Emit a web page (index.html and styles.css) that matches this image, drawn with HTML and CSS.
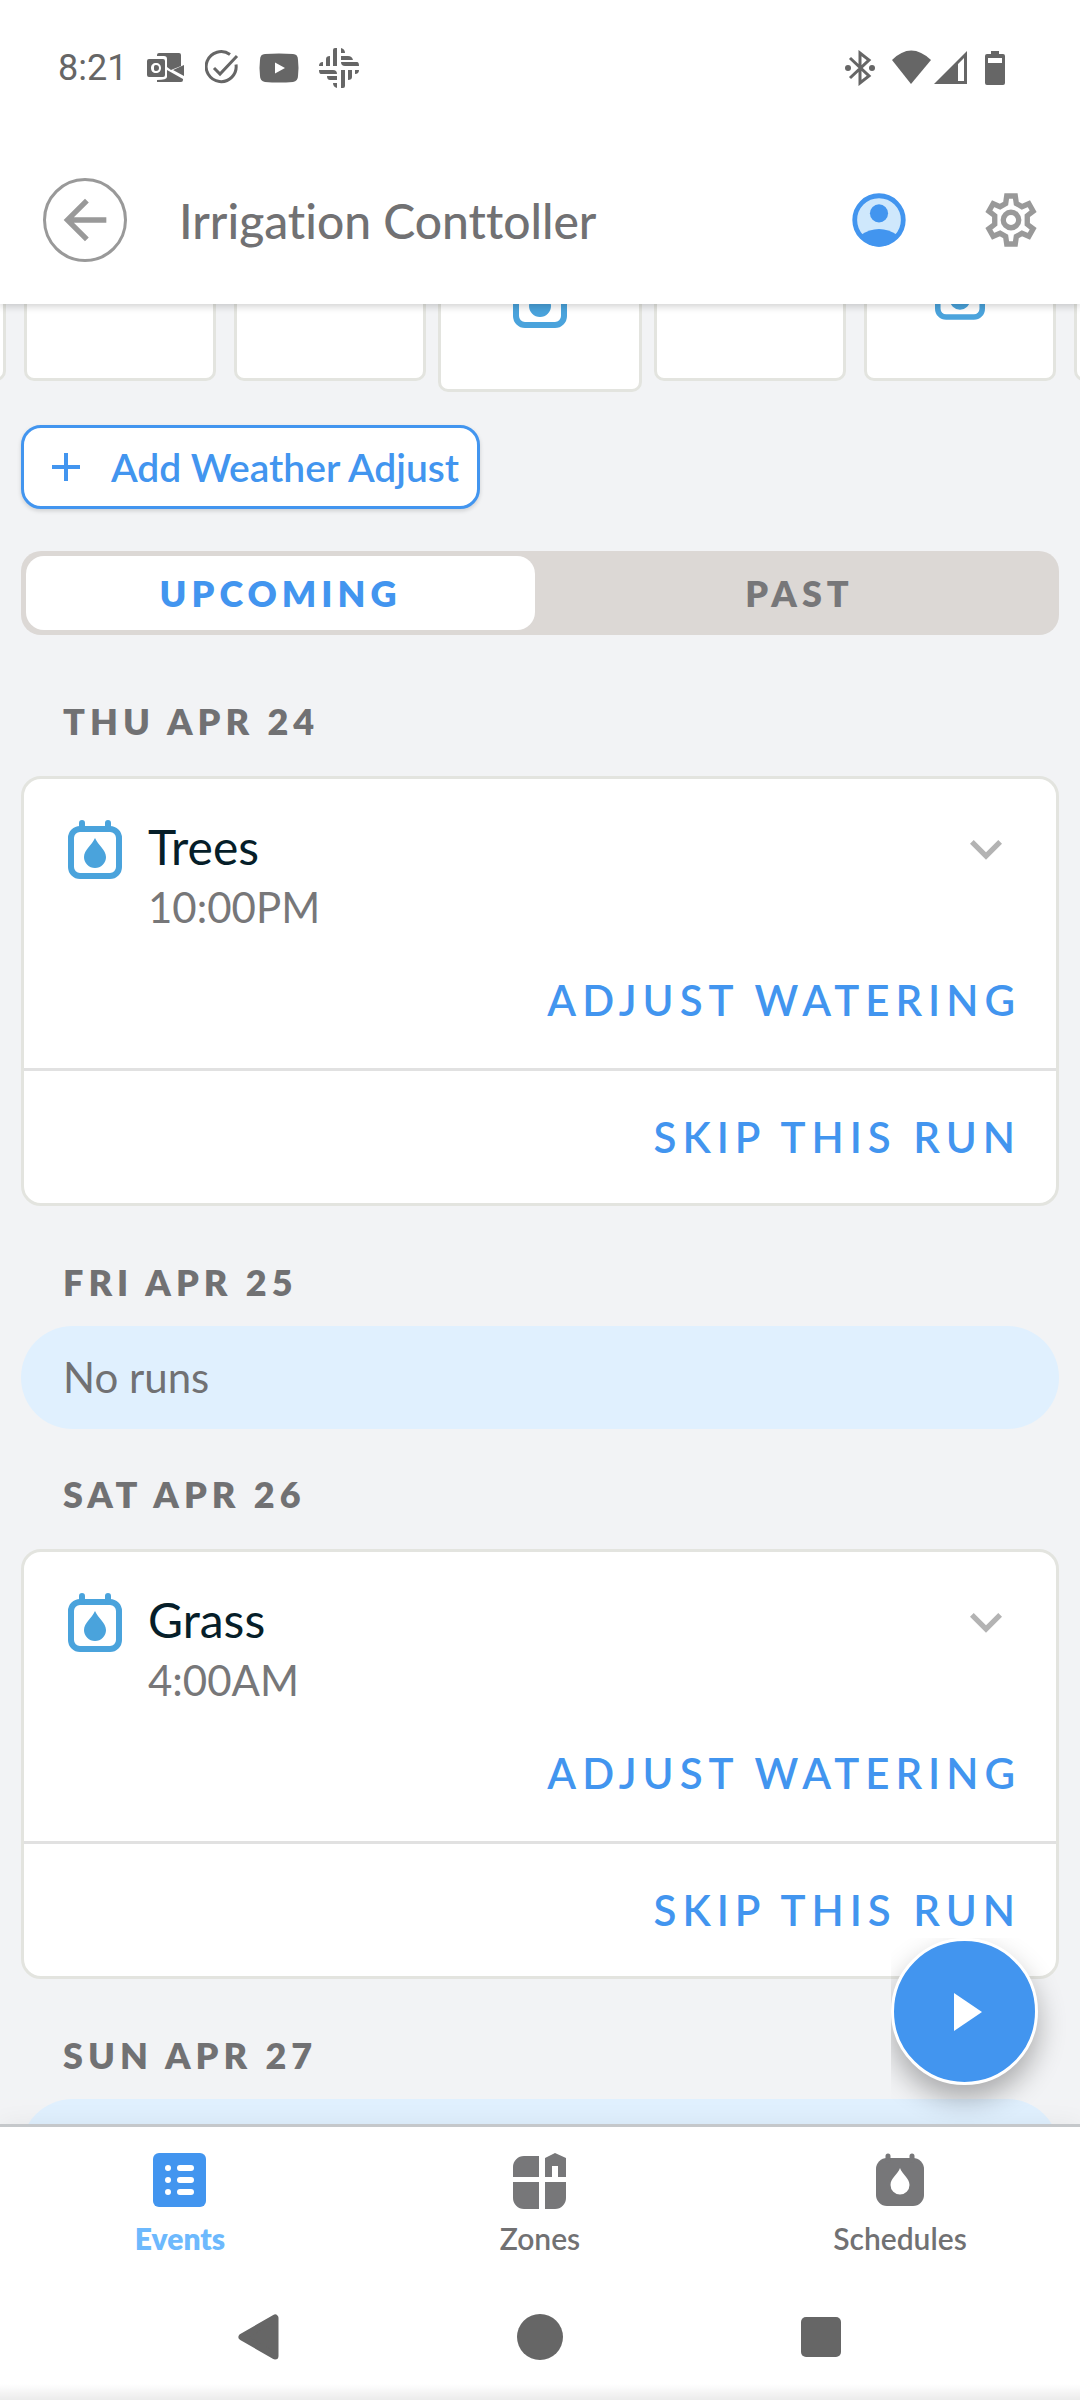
FILE: index.html
```html
<!DOCTYPE html>
<html lang="en">
<head>
	<meta charset="utf-8">
	<meta name="viewport" content="width=device-width, initial-scale=1">
	<title>Irrigation Conttoller</title>
	<link rel="stylesheet" href="styles.css">
</head>
<body>
	<!-- shared icons -->
	<svg class="icon-defs" aria-hidden="true">
		<symbol id="calendar" viewBox="0 0 54 59">
			<rect x="3" y="9" width="48" height="47" rx="9" fill="none" stroke="currentColor" stroke-width="6"/>
			<path d="M14 8V3M40 8V3" stroke="currentColor" stroke-width="6" stroke-linecap="round"/>
			<path d="M27 18c3 7 11 12 11 19a11 11 0 0 1-22 0c0-7 8-12 11-19z" fill="currentColor"/>
		</symbol>
		<symbol id="chevron" viewBox="0 0 24 24">
			<path d="M7.4 8.6 12 13.2l4.6-4.6L18 10l-6 6-6-6z" fill="currentColor"/>
		</symbol>
	</svg>

	<header class="top">
		<div class="status-bar">
			<div class="status-left">
				<span class="time">8:21</span>
				<svg width="38" height="32" viewBox="0 0 38 32">
					<path d="M12 1h20a2 2 0 0 1 2 2v11l-10 4-4-3V7q0-3-3-3h-7V3a2 2 0 0 1 2-2zM10 28q10 0 10-3v-7l16 9v1a2 2 0 0 1-2 2H10zM26 18l11-5v11z" fill="#666"/>
					<path fill-rule="evenodd" d="M2 7h14a2 2 0 0 1 2 2v14a2 2 0 0 1-2 2H2a2 2 0 0 1-2-2V9a2 2 0 0 1 2-2zm7 4c-3 0-5 2-5 5s2 5 5 5 5-2 5-5-2-5-5-5zm0 2c2 0 3 1 3 3s-1 3-3 3-2-1-2-3 0-3 2-3z" fill="#666"/>
				</svg>
				<svg width="34" height="36" viewBox="0 0 34 36">
					<path d="M25 4.500A15 15 0 1 0 31 14.500" fill="none" stroke="#666" stroke-width="3"/>
					<path d="M9 18l6 6L32 6" fill="none" stroke="#666" stroke-width="3"/>
				</svg>
				<svg width="40" height="30" viewBox="0 0 40 30">
					<path d="M6 1q14-1 28 0 5 0 5 6 1 8 0 16 0 5-5 6-14 1-28 0-5-1-5-6-1-8 0-16 0-6 5-6z" fill="#666"/>
					<path d="M16 9.500v11l10-5.500z" fill="#fff"/>
				</svg>
				<svg width="40" height="40" viewBox="0 0 40 40" fill="#666">
					<path d="M14 18V2q0-2 2-2h2v18zM22 0q4 1 4 5h-4zM7 18v-7q0-3 4-3v10zM0 18q0-4 4-4v4z"/>
					<path d="M22 14h16q2 0 2 4H26q-4 0-4-4zM22 8h7q4 0 5 4H22z"/>
					<path d="M26 22v16q0 2-2 2h-2V22zM33 22v7q0 3-4 3V22zM40 22q0 4-4 4v-4z"/>
					<path d="M18 26H2q-2 0-2-4h14q4 0 4 4zM18 32h-7q-3 0-3-4h10zM18 40q-4-1-4-5h4z"/>
				</svg>
			</div>
			<div class="status-right">
				<svg width="30" height="36" viewBox="0 0 30 36">
					<path d="M5 8l19 18-9 7V3l9 7L5 28" fill="none" stroke="#666" stroke-width="3"/>
					<circle cx="3" cy="18" r="3" fill="#666"/>
					<circle cx="27" cy="18" r="3" fill="#666"/>
				</svg>
				<svg width="76" height="36" viewBox="0 0 76 36">
					<path d="M0 10Q19-9 39 10L19 34z" fill="#666"/>
					<path fill-rule="evenodd" d="M75 1v33H42zM66 14v17h6V8z" fill="#666"/>
				</svg>
				<svg width="20" height="36" viewBox="0 0 20 36">
					<path fill-rule="evenodd" d="M6 1h8v3h4a2 2 0 0 1 2 2v27a2 2 0 0 1-2 2H2a2 2 0 0 1-2-2V6a2 2 0 0 1 2-2h4zM3 8v5h14V8z" fill="#666"/>
				</svg>
			</div>
		</div>
		<div class="app-bar">
			<button class="back" aria-label="Back">
				<svg width="64" height="64" viewBox="0 0 24 24" fill="#999"><path d="M20 11H7.830l5.590-5.590L12 4l-8 8 8 8 1.410-1.410L7.830 13H20z"/></svg>
			</button>
			<h1>Irrigation Conttoller</h1>
			<button class="icon-button" aria-label="Account">
				<svg width="64" height="64" viewBox="0 0 24 24">
					<circle cx="12" cy="12" r="9.100" fill="#cfe8fc" stroke="#4295ef" stroke-width="1.800"/>
					<circle cx="12" cy="9.500" r="3.400" fill="#4295ef"/>
					<path d="M5 17.700Q12 13 19 17.700 16.500 22 12 22T5 17.700z" fill="#4295ef"/>
				</svg>
			</button>
			<button class="icon-button" aria-label="Settings">
				<svg width="64" height="64" viewBox="0 0 24 24" fill="none" stroke="#999" stroke-width="2">
					<path d="M10.400 3h3.200l.4 2.800 2.100 1.200 2.600-1.100 1.600 2.800-2.200 1.700v3.200l2.200 1.700-1.600 2.800-2.600-1.100-2.100 1.200-.4 2.800h-3.200l-.4-2.800-2.100-1.200-2.600 1.100-1.600-2.800 2.200-1.700v-3.200L3.700 8.700l1.600-2.800L7.900 7 10 5.800z"/>
					<circle cx="12" cy="12" r="2.900"/>
				</svg>
			</button>
		</div>
	</header>

	<main class="content">
		<div class="week">
			<div class="week-day"></div>
			<div class="week-day"></div>
			<div class="week-day"></div>
			<div class="week-day current"><svg class="calendar"><use href="#calendar"/></svg></div>
			<div class="week-day"></div>
			<div class="week-day"><svg class="calendar"><use href="#calendar"/></svg></div>
			<div class="week-day"></div>
		</div>

		<button class="add-button">
			<svg width="28" height="28" viewBox="0 0 28 28"><path d="M14 0v28M0 14h28" stroke="#4295ef" stroke-width="4"/></svg>
			Add Weather Adjust
		</button>

		<div class="tabs">
			<button class="tab active">UPCOMING</button>
			<button class="tab">PAST</button>
		</div>

		<h2>THU APR 24</h2>
		<section class="card">
			<div class="run">
				<svg class="calendar"><use href="#calendar"/></svg>
				<div class="run-text">
					<div class="run-name">Trees</div>
					<div class="run-time">10:00PM</div>
				</div>
				<button class="expand" aria-label="Show details"><svg width="64" height="64"><use href="#chevron"/></svg></button>
			</div>
			<button class="action">ADJUST WATERING</button>
			<button class="action skip">SKIP THIS RUN</button>
		</section>

		<h2>FRI APR 25</h2>
		<div class="no-runs">No runs</div>

		<h2>SAT APR 26</h2>
		<section class="card">
			<div class="run">
				<svg class="calendar"><use href="#calendar"/></svg>
				<div class="run-text">
					<div class="run-name">Grass</div>
					<div class="run-time">4:00AM</div>
				</div>
				<button class="expand" aria-label="Show details"><svg width="64" height="64"><use href="#chevron"/></svg></button>
			</div>
			<button class="action">ADJUST WATERING</button>
			<button class="action skip">SKIP THIS RUN</button>
		</section>

		<h2>SUN APR 27</h2>
		<div class="no-runs"></div>
	</main>

	<footer class="bottom">
		<button class="play" aria-label="Run now">
			<svg width="28" height="38" viewBox="0 0 28 38"><path d="M0 0v38l28-19z" fill="#fff"/></svg>
		</button>
		<nav class="nav">
			<a href="#" class="nav-item active">
				<svg width="64" height="64" viewBox="0 0 64 64">
					<rect x="5" y="5" width="53" height="54" rx="6" fill="#4295ef"/>
					<path d="M20 20h0M20 32h0M20 44h0M32 20h11M32 32h11M32 44h11" stroke="#fff" stroke-width="6" stroke-linecap="round"/>
				</svg>
				Events
			</a>
			<a href="#" class="nav-item">
				<svg width="64" height="64" viewBox="0 0 64 64" fill="#777779">
					<path d="M16 8h15v21H5V19A11 11 0 0 1 16 8zM5 34h26v27H16A11 11 0 0 1 5 50zM37 34h21v16a11 11 0 0 1-11 11H37z"/>
					<path d="M37 10l10-5 11 5v19h-8V18h-6v11h-7z"/>
				</svg>
				Zones
			</a>
			<a href="#" class="nav-item">
				<svg width="64" height="64" viewBox="0 0 64 64">
					<rect x="8" y="10" width="48" height="48" rx="11" fill="#777779"/>
					<path d="M20 12V8M44 12V8" stroke="#777779" stroke-width="5" stroke-linecap="round"/>
					<path d="M32 20c2 6 9.500 10 9.500 17a9.500 9.500 0 0 1-19 0c0-7 7.500-11 9.500-17z" fill="#fff"/>
				</svg>
				Schedules
			</a>
		</nav>
		<div class="system-nav">
			<button aria-label="System back"><svg width="46" height="46" viewBox="0 0 46 46"><path d="M39 4v38L6 23z" fill="#666" stroke="#666" stroke-width="7" stroke-linejoin="round"/></svg></button>
			<button aria-label="Home"><svg width="46" height="46" viewBox="0 0 46 46"><circle cx="23" cy="23" r="23" fill="#666"/></svg></button>
			<button aria-label="Recent apps"><svg width="46" height="46" viewBox="0 0 46 46"><rect x="3" y="3" width="40" height="40" rx="5" fill="#666"/></svg></button>
		</div>
	</footer>
</body>
</html>
```
FILE: styles.css
```css
*{
	box-sizing: border-box;
}
body{
	margin: 0;
	height: 100vh;
	display: flex;
	flex-direction: column;
	overflow: hidden;
	background: #f2f3f5;
	color: #717173;
	font-family: Lato, sans-serif;
	font-variant-ligatures: none;
}
button{
	padding: 0;
	border: 0;
	background: none;
	color: inherit;
	font-family: inherit;
}
svg{
	display: block;
	flex: none;
}
.icon-defs{
	position: absolute;
	width: 0;
	height: 0;
}

/* header */
.top{
	flex: none;
	z-index: 1;
	background: white;
	box-shadow: 0 2px 8px rgba(0, 0, 0, 0.2);
}
.status-bar{
	height: 136px;
	padding: 0 75px 0 58px;
	display: flex;
	justify-content: space-between;
	align-items: center;
}
.status-left, .status-right{
	display: flex;
	align-items: center;
	gap: 20px;
}
.status-right{
	gap: 17px;
}
.time{
	color: #666;
	font-family: Roboto, sans-serif;
	font-size: 36px;
}
.app-bar{
	height: 168px;
	padding: 0 37px 0 43px;
	display: flex;
	align-items: center;
}
.back{
	width: 84px;
	height: 84px;
	display: flex;
	justify-content: center;
	align-items: center;
	border: 3px solid #999;
	border-radius: 50%;
}
h1{
	flex: 1;
	margin: 0 0 0 52px;
	font-size: 48px;
	font-weight: 500;
}
.icon-button{
	margin-left: 68px;
}

/* list */
.content{
	flex: 1;
	min-height: 0;
	padding: 0 21px;
	overflow: hidden;
}
.week{
	height: 88px;
	margin: 0 -21px;
	display: flex;
	justify-content: center;
	align-items: flex-end;
	gap: 18px;
	overflow: hidden;
}
.week-day{
	flex: none;
	width: 192px;
	height: 240px;
	margin-bottom: 11px;
	padding-bottom: 58px;
	display: flex;
	justify-content: center;
	align-items: flex-end;
	background: white;
	border: 3px solid #e3e4df;
	border-radius: 10px;
}
.week-day.current{
	width: 204px;
	margin: 0 -6px;
	padding-bottom: 61px;
}
.calendar{
	width: 54px;
	height: 59px;
	color: #4aa3dc;
}
.week-day:not(.current) .calendar{
	width: 50px;
	height: 55px;
}
.add-button{
	height: 84px;
	margin-top: 33px;
	padding: 0 18px 0 28px;
	display: flex;
	align-items: center;
	gap: 31px;
	background: white;
	border: 3px solid #4295ef;
	border-radius: 20px;
	box-shadow: 0 2px 4px rgba(0, 0, 0, 0.15);
	color: #4295ef;
	font-size: 39px;
	font-weight: 600;
}
.tabs{
	height: 84px;
	margin: 42px 0 21px;
	padding: 5px;
	display: flex;
	gap: 10px;
	background: #dcd8d5;
	border-radius: 20px;
}
.tab{
	flex: 1;
	border-radius: 18px;
	color: #777779;
	font-size: 36px;
	font-weight: 800;
	letter-spacing: 5px;
}
.tab.active{
	background: white;
	color: #4295ef;
}
h2{
	margin: 0;
	padding: 41px 42px 20px;
	font-size: 36px;
	font-weight: 800;
	line-height: 48px;
	letter-spacing: 5px;
}
.card{
	margin: 11px 0;
	background: white;
	border: 3px solid #e3e4df;
	border-radius: 20px;
}
.run{
	padding: 38px 38px 0 44px;
	display: flex;
	align-items: flex-start;
}
.run .calendar{
	margin-top: 3px;
}
.run-text{
	flex: 1;
	margin-left: 26px;
	line-height: 60px;
}
.run-name{
	color: #061e29;
	font-size: 48px;
}
.run-time{
	color: #777779;
	font-size: 42px;
}
.expand{
	color: #b3b3b3;
}
.action{
	width: 100%;
	height: 131px;
	padding: 0 35px 5px 0;
	display: block;
	color: #4295ef;
	font-size: 42px;
	font-weight: 600;
	letter-spacing: 6px;
	text-align: right;
}
.skip{
	height: 135px;
	padding-bottom: 0;
	border-top: 3px solid #e1e1e1;
}
.no-runs{
	height: 103px;
	padding: 0 42px;
	background: #e0f0fe;
	border-radius: 52px;
	font-size: 42px;
	line-height: 103px;
}

/* bottom bars */
.bottom{
	flex: none;
	position: relative;
	background: white;
	border-top: 3px solid #c5c8cb;
	box-shadow: 0 0 24px rgba(0, 0, 0, 0.06);
}
.play{
	position: absolute;
	right: 42px;
	bottom: 315px;
	width: 147px;
	height: 147px;
	padding-left: 6px;
	display: flex;
	justify-content: center;
	align-items: center;
	background: #4295ef;
	border: 3px solid white;
	border-radius: 50%;
	box-shadow: 0 14px 28px rgba(0, 0, 0, 0.3);
	clip-path: inset(0 -50px -39px 0);
}
.nav{
	padding-top: 21px;
	display: grid;
	grid-template-columns: repeat(3, 1fr);
}
.nav-item{
	display: flex;
	flex-direction: column;
	align-items: center;
	color: #717173;
	font-size: 30px;
	font-weight: 600;
	line-height: 52px;
	text-decoration: none;
}
.nav-item.active{
	color: #6db9fd;
	font-weight: 800;
}
.system-nav{
	width: 78%;
	height: 126px;
	margin-top: 10px;
	margin-left: auto;
	margin-right: auto;
	display: grid;
	grid-template-columns: repeat(3, 1fr);
	place-items: center;
	box-shadow: none;
}
.bottom::after{
	content: "";
	position: absolute;
	left: 0;
	right: 0;
	bottom: 0;
	height: 16px;
	background: linear-gradient(rgba(0, 0, 0, 0), rgba(0, 0, 0, 0.08));
}
```
